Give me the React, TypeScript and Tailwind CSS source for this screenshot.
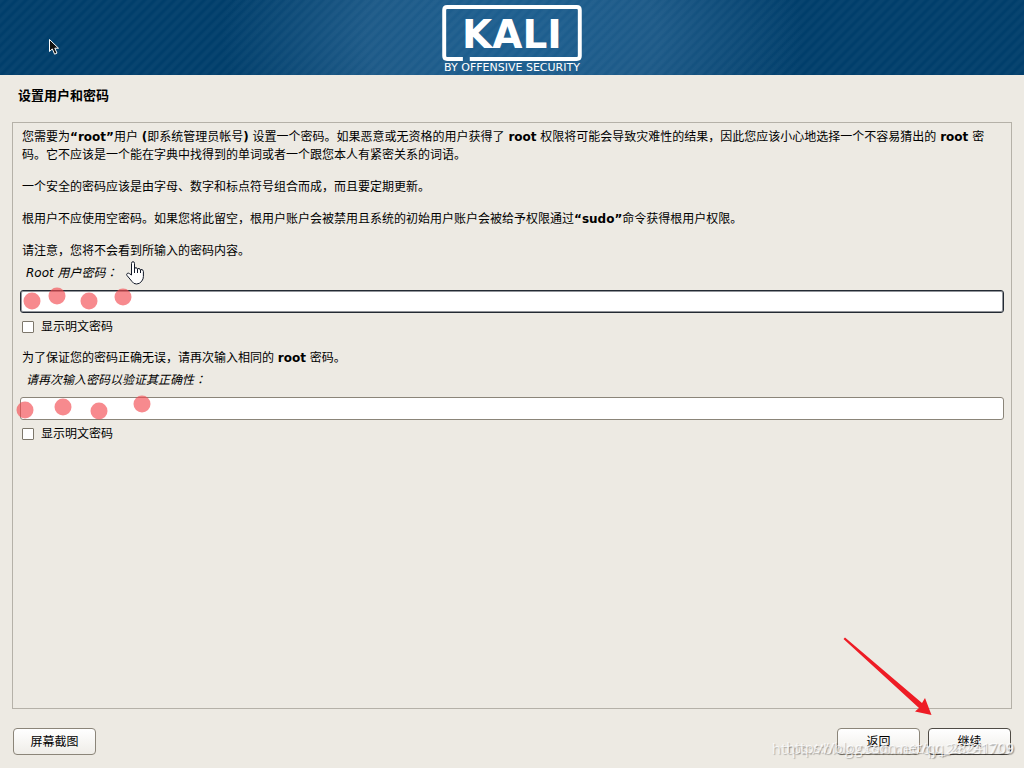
import type {InputHTMLAttributes, ReactNode} from "react";

const dots = {
    first: [{x: 32, y: 301}, {x: 57, y: 296}, {x: 89, y: 301}, {x: 123, y: 297}],
    second: [{x: 25, y: 410}, {x: 63, y: 407}, {x: 99, y: 411}, {x: 142, y: 404}],
}

const Logo = () => (
    <div className="relative flex flex-col items-center text-white pt-[5px]">
        <svg width="142" height="57" viewBox="0 0 142 57" fill="none" stroke="white" strokeWidth="4" aria-hidden="true">
            <path d="M21 55H5Q2 55 2 52V5Q2 2 5 2H137Q140 2 140 5V52Q140 55 137 55H28"/>
        </svg>
        <span className="absolute top-[15px] text-[39px] leading-10 font-bold">KALI</span>
        <span className="text-[11px] leading-[14px] whitespace-nowrap">BY OFFENSIVE SECURITY</span>
    </div>
)

// full-width colon, centred in its box
const Colon = () => <span className="font-['Noto_Sans_CJK_JP',sans-serif]" lang="ja">：</span>

const PasswordField = ({id, label, focused, marks}: {
    id: string, label: ReactNode, focused?: boolean, marks: { x: number, y: number }[]
}) => (
    <div>
        <label htmlFor={id} className="block italic ml-[6px] mt-[3px] leading-[18px]">{label}<Colon/></label>
        <input id={id} type="password"
               className={focused
                   ? "block w-full h-[23px] mt-2 rounded-[3px] border border-[#232a33] bg-white outline-none shadow-[inset_0_0_0_1px_#232a3380]"
                   : "block w-full h-[23px] mt-2 rounded-[3px] border border-[#8b8579] bg-white outline-none"}/>
        {marks.map((m) => (
            <span key={m.x} className="absolute size-[17px] -translate-1/2 rounded-full bg-[#f24b52]/65"
                  style={{left: m.x, top: m.y}}/>
        ))}
        <CheckRow id={id + "-show"}/>
    </div>
)

const CheckRow = (props: InputHTMLAttributes<HTMLInputElement>) => (
    <div className="flex items-center gap-[7px] mt-[5px] ml-0.5 leading-[18px]">
        <input type="checkbox" className="appearance-none size-3 rounded-[1px] border border-[#7d776b] bg-white" {...props}/>
        <label htmlFor={props.id}>显示明文密码</label>
    </div>
)

const Button = ({children, dark}: { children: ReactNode, dark?: boolean }) => (
    <button type="button"
            className={dark
                ? "w-[83px] h-[27px] rounded-[4px] border border-[#4f4b45] bg-linear-to-b from-white to-[#efede8]"
                : "w-[83px] h-[27px] rounded-[4px] border border-[#8b8579] bg-linear-to-b from-white to-[#efede8]"}>
        {children}
    </button>
)

const App = () => {
    return (
        <div
            className="relative flex flex-col min-h-screen overflow-hidden bg-[#edeae3] text-black text-xs font-['DejaVu_Sans','Noto_Sans_CJK_SC',sans-serif]"
            lang="zh-CN">
            <header
                className="flex justify-center h-[75px] bg-[repeating-linear-gradient(135deg,#ffffff08_0px,#ffffff08_2px,transparent_4px,transparent_5px,#ffffff08_7px),radial-gradient(ellipse_290px_190px_at_center,#1d5f90,#1d5a88_50%,#003e6b)]">
                <Logo/>
            </header>
            <h1 className="mt-3 ml-[18px] text-[13px] leading-[18px] font-bold">设置用户和密码</h1>

            <main className="grow mx-3 mt-[17px] px-[7px] pt-[5px] border border-[#b5b1a8]">
                <div className="space-y-[14px] px-0.5 leading-[18px]">
                    <p>
                        您需要为<b>“root”</b>用户 <b>(</b>即系统管理员帐号<b>)</b> 设置一个密码。如果恶意或无资格的用户获得了 <b>root</b> 权限将可能会导致灾难性的结果，因此您应该小心地选择一个不容易猜出的 <b>root</b> 密码。它不应该是一个能在字典中找得到的单词或者一个跟您本人有紧密关系的词语。
                    </p>
                    <p>一个安全的密码应该是由字母、数字和标点符号组合而成，而且要定期更新。</p>
                    <p>根用户不应使用空密码。如果您将此留空，根用户账户会被禁用且系统的初始用户账户会被给予权限通过<b>“sudo”</b>命令获得根用户权限。</p>
                    <p>请注意，您将不会看到所输入的密码内容。</p>
                </div>
                <PasswordField id="root-password" label="Root 用户密码" focused marks={dots.first}/>
                <p className="px-0.5 mt-[13px] leading-[18px]">为了保证您的密码正确无误，请再次输入相同的 <b>root</b> 密码。</p>
                <PasswordField id="root-password-again" label="请再次输入密码以验证其正确性" marks={dots.second}/>
            </main>

            <footer className="flex gap-2 mx-[13px] mt-[19px] mb-[13px]">
                <Button>屏幕截图</Button>
                <span className="grow"/>
                <Button>返回</Button>
                <Button dark>继续</Button>
            </footer>

            {/* mouse pointers */}
            <svg className="absolute left-[49px] top-[39px]" width="11" height="17" viewBox="0 0 11 17" aria-hidden="true">
                <path d="M.5 .5V12.5L3.3 9.9L5.6 15.2L8 14.1L5.8 9.2H9.5Z" fill="#111" stroke="white"/>
            </svg>
            <svg className="absolute left-[126px] top-[261px]" width="19" height="24" viewBox="0 0 19 24" aria-hidden="true">
                <path
                    d="M5.5 14V2.5Q5.5 .7 7 .7T8.5 2.5V8Q8.6 6.6 10 6.7T11.5 8.5Q11.7 7.3 13 7.5T14.5 9.3Q14.8 8.3 16 8.6T17.4 10.5V15.5Q17.4 18 15.8 20Q14 23 10.5 23Q7.5 23 6 20.5L1 14.5Q.2 13.2 1.3 12.4Q2.4 11.8 3.4 12.6Z"
                    fill="white" stroke="#111827"/>
                <path d="M8.5 7V12M11.5 8V12M14.5 9V12" stroke="#111827" fill="none"/>
            </svg>

            <svg className="absolute right-[92px] bottom-[51px]" width="89" height="80" viewBox="0 0 89 80" aria-hidden="true">
                <path d="M.5 2L2 .5L79 66L82 61L88.500 78L72 74.500L76 71Z" fill="#ee1c25"/>
            </svg>

            {/* watermark, stamped twice */}
            <div className="absolute right-[10px] bottom-[10px] grid justify-items-end items-center text-white/75 font-['Open_Sans',sans-serif] pointer-events-none text-shadow-[1px_1px_1px_#00000040]">
                <span className="col-start-1 row-start-1 text-[15px] leading-5">https://blog.csdn.net/qy_28221709</span>
                <span className="col-start-1 row-start-1 text-sm leading-5">https://blog.csdn.net/qq_28241709</span>
            </div>
        </div>
    )
}

export default App
